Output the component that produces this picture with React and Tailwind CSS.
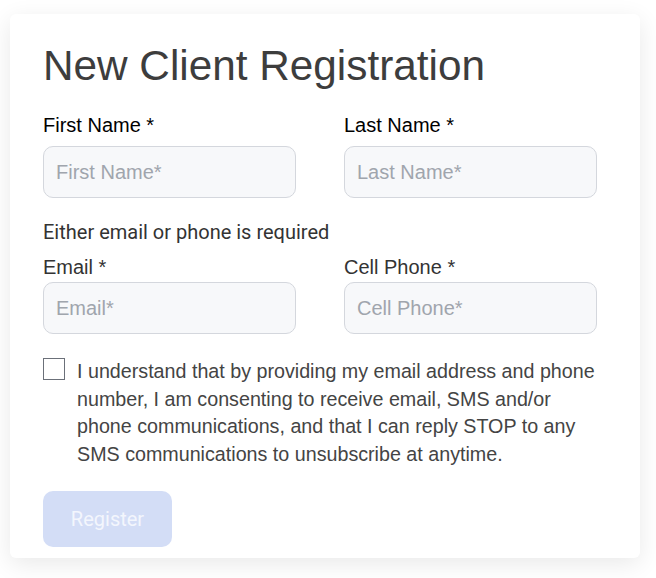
import React, { useState } from 'react';

const Field = ({ label, placeholder, type = 'text', value, onChange, labelClass = 'text-black mb-[9px]' }) => (
  <div className="flex flex-col">
    <label className={`text-[20px] leading-[24px] ${labelClass}`}>{label}</label>
    <input
      type={type}
      value={value}
      onChange={(e) => onChange(e.target.value)}
      placeholder={placeholder}
      className="h-[52px] w-full px-3 rounded-[10px] border border-[#d4d7dd] bg-[#f7f8fa] text-[20px] text-[#333] placeholder:text-[#a0a5ad] focus:outline-none"
    />
  </div>
);

const App = () => {
  const [firstName, setFirstName] = useState('');
  const [lastName, setLastName] = useState('');
  const [email, setEmail] = useState('');
  const [phone, setPhone] = useState('');
  const [agreed, setAgreed] = useState(false);

  const canSubmit = agreed && firstName.trim() && lastName.trim() && (email.trim() || phone.trim());

  return (
    <div className="min-h-screen bg-white pt-[14px] pl-[10px]" style={{ fontFamily: '"Liberation Sans", Arial, sans-serif' }}>
      <div className="w-[630px] bg-white rounded-md shadow-[0_6px_24px_rgba(0,0,0,0.09)] pl-[33px] pr-[43px] pt-[28px] pb-[11px]">
        <h1 className="text-[42.3px] leading-[48px] text-[#3d3d3d] mb-[23px]">New Client Registration</h1>

        <div className="grid grid-cols-2 gap-x-[48px]">
          <Field label="First Name *" placeholder="First Name*" value={firstName} onChange={setFirstName} />
          <Field label="Last Name *" placeholder="Last Name*" value={lastName} onChange={setLastName} />
        </div>

        <p className="mt-[20px] text-[20px] leading-[28px] text-[#333]" style={{ fontFamily: 'Roboto, sans-serif' }}>
          Either email or phone is required
        </p>

        <div className="grid grid-cols-2 gap-x-[48px] mt-[9px]">
          <Field label="Email *" placeholder="Email*" type="email" value={email} onChange={setEmail} labelClass="text-[#333] mb-[3px]" />
          <Field label="Cell Phone *" placeholder="Cell Phone*" type="tel" value={phone} onChange={setPhone} labelClass="text-[#333] mb-[3px]" />
        </div>

        <label className="flex items-start gap-[12px] mt-[24px] mr-[-14px] cursor-pointer">
          <input
            type="checkbox"
            checked={agreed}
            onChange={(e) => setAgreed(e.target.checked)}
            className="appearance-none shrink-0 w-[22px] h-[22px] border-[1.5px] border-[#6b7079] bg-white checked:bg-[#6b86e6]"
          />
          <span className="text-[19.7px] leading-[27.5px] text-[#444]">
            I understand that by providing my email address and phone number, I am consenting to receive email, SMS and/or phone communications, and that I can reply STOP to any SMS communications to unsubscribe at anytime.
          </span>
        </label>

        <button
          disabled={!canSubmit}
          className="mt-[23px] w-[129px] h-[56px] rounded-[10px] bg-[#d3ddf6] text-[20px] text-[#f3f6fd] enabled:bg-[#6b86e6] enabled:text-white"
          style={{ fontFamily: 'Roboto, sans-serif' }}
        >
          Register
        </button>
      </div>
    </div>
  );
};

export default App;
